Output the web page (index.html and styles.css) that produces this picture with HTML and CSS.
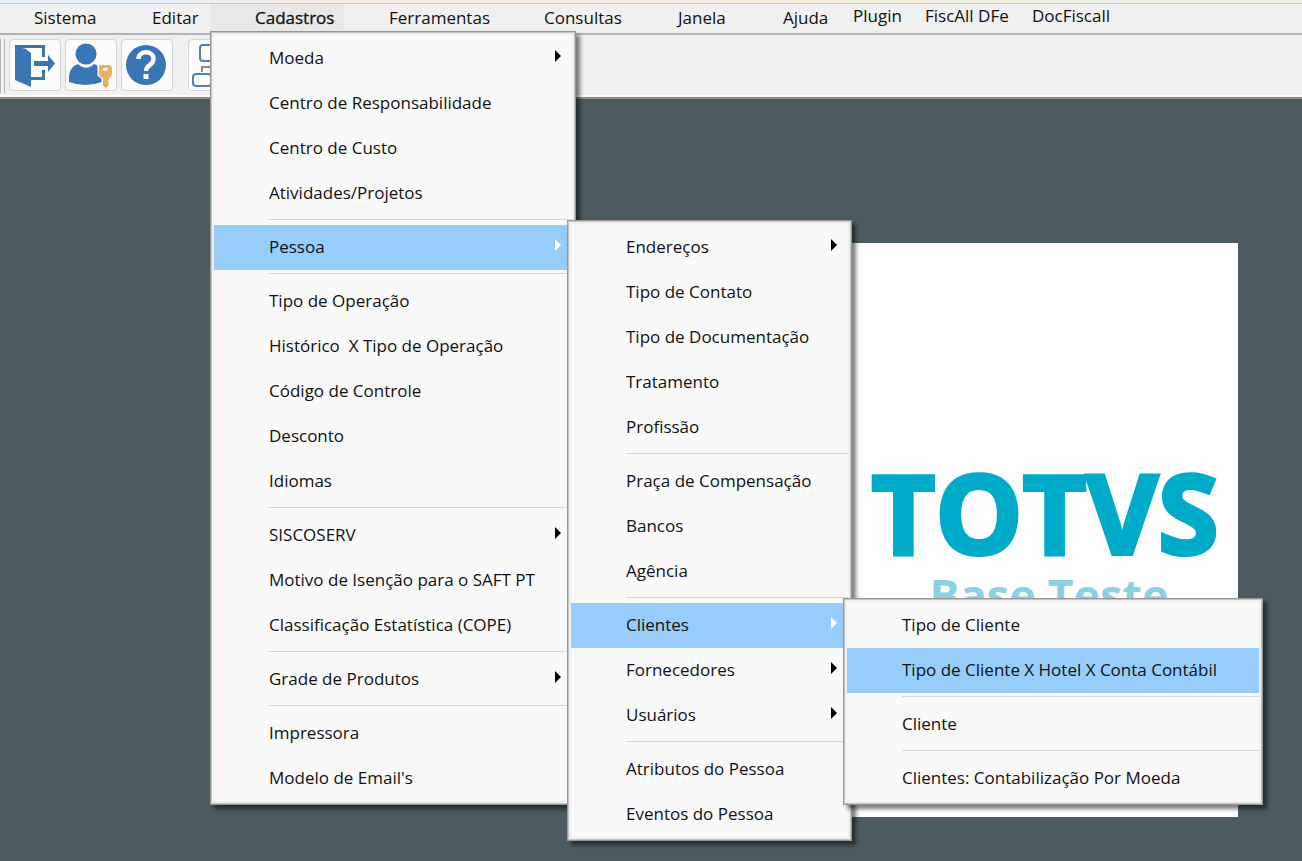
FILE: index.html
```html
<!DOCTYPE html>
<html lang="pt-BR">
<head>
<meta charset="utf-8">
<title>TOTVS - Base Teste</title>
<meta name="viewport" content="width=device-width, initial-scale=1">
<link rel="stylesheet" href="styles.css">
</head>
<body>
<div class="app">
  <div class="title-strip"></div>
  <nav class="menubar" aria-label="Menu principal">
    <div class="menubar-item"><button class="menubar-button" type="button">Sistema</button></div>
    <div class="menubar-item"><button class="menubar-button" type="button">Editar</button></div>
    <div class="menubar-item">
      <button class="menubar-button open" type="button" aria-expanded="true">Cadastros</button>
      <ul class="menu menu-main">
        <li><button class="item has-sub" type="button">Moeda</button></li>
        <li><button class="item" type="button">Centro de Responsabilidade</button></li>
        <li><button class="item" type="button">Centro de Custo</button></li>
        <li><button class="item" type="button">Atividades/Projetos</button></li>
        <li class="separator" role="separator"></li>
        <li class="parent">
          <button class="item has-sub selected" type="button" aria-expanded="true">Pessoa</button>
          <ul class="menu submenu menu-person">
            <li><button class="item has-sub" type="button">Endereços</button></li>
            <li><button class="item" type="button">Tipo de Contato</button></li>
            <li><button class="item" type="button">Tipo de Documentação</button></li>
            <li><button class="item" type="button">Tratamento</button></li>
            <li><button class="item" type="button">Profissão</button></li>
            <li class="separator" role="separator"></li>
            <li><button class="item" type="button">Praça de Compensação</button></li>
            <li><button class="item" type="button">Bancos</button></li>
            <li><button class="item" type="button">Agência</button></li>
            <li class="separator" role="separator"></li>
            <li class="parent">
              <button class="item has-sub selected" type="button" aria-expanded="true">Clientes</button>
              <ul class="menu submenu menu-clients">
                <li><button class="item" type="button">Tipo de Cliente</button></li>
                <li><button class="item selected" type="button">Tipo de Cliente X Hotel X Conta Contábil</button></li>
                <li class="separator" role="separator"></li>
                <li><button class="item" type="button">Cliente</button></li>
                <li class="separator" role="separator"></li>
                <li><button class="item" type="button">Clientes: Contabilização Por Moeda</button></li>
              </ul>
            </li>
            <li><button class="item has-sub" type="button">Fornecedores</button></li>
            <li><button class="item has-sub" type="button">Usuários</button></li>
            <li class="separator" role="separator"></li>
            <li><button class="item" type="button">Atributos do Pessoa</button></li>
            <li><button class="item" type="button">Eventos do Pessoa</button></li>
          </ul>
        </li>
        <li class="separator" role="separator"></li>
        <li><button class="item" type="button">Tipo de Operação</button></li>
        <li><button class="item" type="button">Histórico&nbsp; X Tipo de Operação</button></li>
        <li><button class="item" type="button">Código de Controle</button></li>
        <li><button class="item" type="button">Desconto</button></li>
        <li><button class="item" type="button">Idiomas</button></li>
        <li class="separator" role="separator"></li>
        <li><button class="item has-sub" type="button">SISCOSERV</button></li>
        <li><button class="item" type="button">Motivo de Isenção para o SAFT PT</button></li>
        <li><button class="item" type="button">Classificação Estatística (COPE)</button></li>
        <li class="separator" role="separator"></li>
        <li><button class="item has-sub" type="button">Grade de Produtos</button></li>
        <li class="separator" role="separator"></li>
        <li><button class="item" type="button">Impressora</button></li>
        <li><button class="item" type="button">Modelo de Email's</button></li>
      </ul>
    </div>
    <div class="menubar-item"><button class="menubar-button" type="button">Ferramentas</button></div>
    <div class="menubar-item"><button class="menubar-button" type="button">Consultas</button></div>
    <div class="menubar-item"><button class="menubar-button" type="button">Janela</button></div>
    <div class="menubar-item"><button class="menubar-button" type="button">Ajuda</button></div>
    <div class="menubar-item"><button class="menubar-button plugin" type="button">Plugin</button></div>
    <div class="menubar-item"><button class="menubar-button plugin" type="button">FiscAll DFe</button></div>
    <div class="menubar-item"><button class="menubar-button plugin" type="button">DocFiscall</button></div>
  </nav>

  <div class="toolbar" role="toolbar" aria-label="Ferramentas">
    <span class="grip"></span>
    <button class="tool" type="button" aria-label="Sair">
      <svg viewBox="0 0 50 50" width="50" height="50">
        <path d="M5 6.500h28.500V17M33.500 30v8.500H20" fill="none" stroke="#3a76b4" stroke-width="3"/>
        <path d="M5 6l11 3 5 4v34L5 40z" fill="#3a76b4"/>
        <path d="M24 21h14v-6l7 8.500-7 8.500v-6H24z" fill="#3a76b4"/>
      </svg>
    </button>
    <button class="tool" type="button" aria-label="Trocar usuário">
      <svg viewBox="0 0 50 50" width="50" height="50">
        <circle cx="20" cy="14" r="10.500" fill="#3a76b4"/>
        <path d="M3 42v-4c0-7 3-12 9-14 5 5 11 5 16 0 3 1 4 2 4 3v8l4 4v3q-17 6-33 0z" fill="#3a76b4"/>
        <path d="M33 26h12v9l-3 3v9h-5v-9l-4-3z" fill="#fcfcfc" stroke="#fcfcfc" stroke-width="3"/>
        <path fill-rule="evenodd" d="M35 25h8q3 0 3 3v6q0 3-3 4v2l-1 1 1 2-1 1 1 1-3 3-3-2V38q-4-1-4-4v-7q0-2 2-2zm2 3q-1 3 2 3t3-3z" fill="#e9b15a"/>
      </svg>
    </button>
    <button class="tool" type="button" aria-label="Ajuda">
      <svg viewBox="0 0 50 50" width="50" height="50">
        <circle cx="24" cy="25" r="20" fill="#3a76b4"/>
        <path d="M16.500 19c0-9 15-9 15 0 0 6-7.500 6-7.500 12" fill="none" stroke="#fff" stroke-width="4.500"/>
        <path d="M21.500 34h5v5h-5z" fill="#fff"/>
      </svg>
    </button>
    <button class="tool tool-gap" type="button" aria-label="Organograma">
      <svg viewBox="0 0 50 50" width="50" height="50">
        <path d="M25 22v5M13 32v-5h25v5" fill="none" stroke="#8a8a8a" stroke-width="2"/>
        <rect x="11" y="5" width="28" height="16" rx="3" fill="#fff" stroke="#4a80bd" stroke-width="2"/>
        <rect x="4" y="34" width="18" height="12" rx="3" fill="#fff" stroke="#4a80bd" stroke-width="2"/>
        <rect x="28" y="34" width="18" height="12" rx="3" fill="#fff" stroke="#4a80bd" stroke-width="2"/>
      </svg>
    </button>
  </div>

  <main class="workspace">
    <section class="brand">
      <div class="brand-name">TOTVS</div>
      <div class="brand-base">Base Teste</div>
    </section>
  </main>
</div>
</body>
</html>
```
FILE: styles.css
```css
* {
  box-sizing: border-box;
}

body {
  margin: 0;
  background: #4b5b60;
  color: #111;
  font-family: "Open Sans", "Noto Sans", sans-serif;
  font-size: 17px;
  line-height: 24px;
}

button {
  margin: 0;
  border: 0;
  background: none;
  color: inherit;
  font: inherit;
  text-align: left;
  white-space: nowrap;
}

.app {
  display: flex;
  flex-direction: column;
  min-height: 100vh;
  overflow: hidden;
}

.title-strip {
  height: 4px;
  border-bottom: 1px solid #c4c4c4;
  background: linear-gradient(90deg, #eaf2f9 0%, #eaf2f9 14%, #f8ede6 22%, #f8ede6 50%, #f8f2dc 65%, #eef3e4 85%);
}

/* Menu bar */
.menubar {
  display: grid;
  grid-template-columns: 107px 103px 134px 155px 134px 105px 104px 72px 107px 100px;
  height: 31px;
  background: #f0f0f0;
  border-bottom: 2px solid #b4b4b4;
}

.menubar-item {
  position: relative;
}

.menubar-button {
  width: 100%;
  height: 28px;
  padding: 0 0 1px 45px;
}

.menubar-item:first-child .menubar-button {
  padding-left: 34px;
}

.menubar-button.open {
  background: #e8e8e8;
  -webkit-text-stroke: 0.3px #111;
}

.menubar-button.plugin {
  padding: 0 0 4px 11px;
}

/* Drop-down menus */
.menu {
  position: absolute;
  z-index: 2;
  top: 27px;
  left: 0;
  margin: 0;
  padding: 4px 3px 3px;
  list-style: none;
  background: #f9f9f9;
  border: 1px solid #989898;
  box-shadow: inset 0 0 0 1px #c4c4c4, inset 0 0 0 3px #f0f0f0, 4px 4px 4px rgba(0, 0, 0, 0.5);
}

.menu-main {
  min-width: 366px;
}

.menu-person {
  min-width: 285px;
}

.menu-clients {
  min-width: 420px;
}

.submenu {
  top: -5px;
  left: calc(100% - 5px);
}

.parent {
  position: relative;
}

.item {
  display: flex;
  align-items: center;
  width: 100%;
  height: 45px;
  padding: 0 32px 2px 55px;
}

.item.selected {
  background: #96cdfb;
}

.item.has-sub {
  padding-right: 11px;
}

.item.has-sub::after {
  content: "";
  margin: 0 0 3px auto;
  border: 6px solid transparent;
  border-left-color: #000;
  border-right-width: 0;
}

.item.has-sub.selected::after {
  border-left-color: #fff;
}

.separator {
  height: 9px;
  padding: 3px 0 0 55px;
}

.separator::before {
  content: "";
  display: block;
  height: 1px;
  background: #d7d7d7;
}

/* Toolbar */
.toolbar {
  display: flex;
  align-items: flex-start;
  height: 64px;
  padding: 4px 0 0;
  gap: 4px;
  background: #f0f0f0;
  border-bottom: 2px solid #8c8c88;
  box-shadow: inset 0 -2px #fff;
}

.grip {
  width: 5px;
  height: 54px;
  border: solid #b4b4b4;
  border-width: 0 1px;
}

.tool {
  display: flex;
  align-items: center;
  justify-content: center;
  width: 52px;
  height: 52px;
  padding: 0;
  border: 1px solid #d4d4d4;
  border-radius: 4px;
  background: #fcfcfc;
}

.tool-gap {
  margin-left: 11px;
}

/* Workspace */
.workspace {
  display: flex;
  flex: 1;
  justify-content: flex-end;
  align-items: flex-start;
  padding: 144px 64px 44px 0;
  background: #4b5b60;
}

.brand {
  width: 386px;
  height: 574px;
  padding-top: 208px;
  background: #fefefe;
  font-weight: 700;
  text-align: center;
}

.brand-name {
  color: #00abc9;
  font-size: 110px;
  line-height: 120px;
  -webkit-text-stroke: 4px #00abc9;
}

.brand-base {
  color: #8ad2e2;
  font-size: 45px;
  line-height: 48px;
  text-indent: 8px;
}
```
